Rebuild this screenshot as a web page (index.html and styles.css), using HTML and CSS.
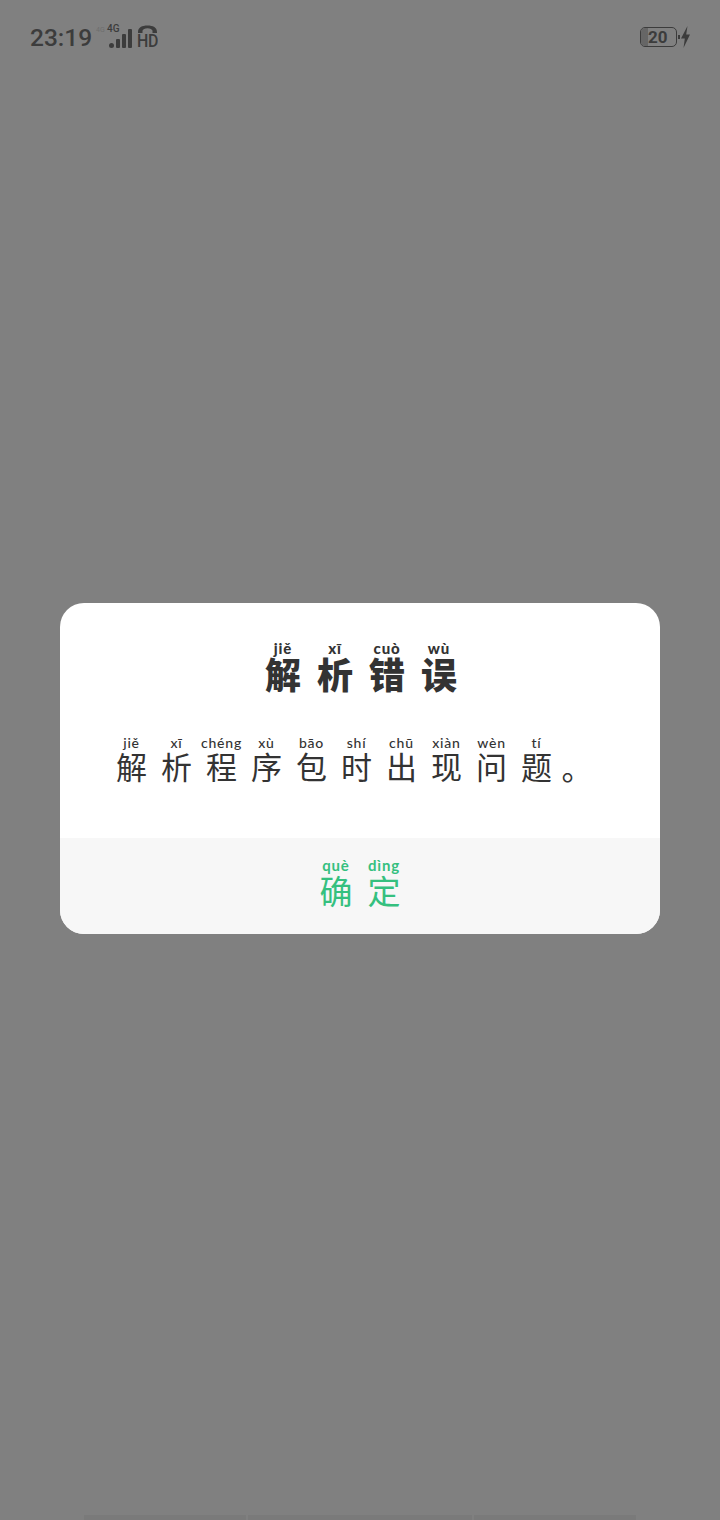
FILE: index.html
```html
<!DOCTYPE html>
<html lang="zh-CN">

<head>
    <meta charset="UTF-8">
    <meta name="viewport" content="width=device-width, initial-scale=1.0">
    <title>解析错误</title>
    <link rel="stylesheet" href="styles.css">
</head>

<body>
    <div class="page">
        <div class="status-bar">
            <div class="status-left">
                <span class="time">23:19</span>
                <span class="tiny-mark">4G</span>
                <div class="signal">
                    <span class="net">4G</span>
                    <svg class="bars" width="23" height="20" viewBox="0 0 23 20">
                        <circle cx="2.5" cy="16.5" r="2.5" fill="#3c3c3c" />
                        <rect x="7" y="10" width="4" height="9" rx="1" fill="#3c3c3c" />
                        <rect x="13" y="5" width="4" height="14" rx="1" fill="#3c3c3c" />
                        <rect x="19" y="0" width="4" height="19" rx="1" fill="#3c3c3c" />
                    </svg>
                </div>
                <div class="hd">
                    <svg width="21" height="9" viewBox="0 0 21 9">
                        <path d="M1 7C1 2.500 5 0.500 10.500 0.500S20 2.500 20 7V8H15.500V5.800C15.500 4.500 13 3.200 10.500 3.200S5.500 4.500 5.500 5.800V8H1Z" fill="#3c3c3c" />
                    </svg>
                    <span class="hd-text">HD</span>
                </div>
            </div>
            <div class="status-right">
                <div class="battery">
                    <span class="battery-fill"></span>
                    <span class="battery-num">20</span>
                </div>
                <span class="battery-dot"></span>
                <svg width="9" height="22" viewBox="0 0 9 22">
                    <path d="M6.500 0L0 12.500H3.800L2.500 22L9 8.500H5.200Z" fill="#3c3c3c" />
                </svg>
            </div>
        </div>

        <div class="dialog">
            <div class="dialog-body">
                <h1 class="dialog-title">
                    <span class="ch"><ruby>解<rt>jiě</rt></ruby></span>
                    <span class="ch"><ruby>析<rt>xī</rt></ruby></span>
                    <span class="ch"><ruby>错<rt>cuò</rt></ruby></span>
                    <span class="ch"><ruby>误<rt>wù</rt></ruby></span>
                </h1>
                <p class="dialog-text">
                    <span class="ch"><ruby>解<rt>jiě</rt></ruby></span>
                    <span class="ch"><ruby>析<rt>xī</rt></ruby></span>
                    <span class="ch"><ruby>程<rt>chéng</rt></ruby></span>
                    <span class="ch"><ruby>序<rt>xù</rt></ruby></span>
                    <span class="ch"><ruby>包<rt>bāo</rt></ruby></span>
                    <span class="ch"><ruby>时<rt>shí</rt></ruby></span>
                    <span class="ch"><ruby>出<rt>chū</rt></ruby></span>
                    <span class="ch"><ruby>现<rt>xiàn</rt></ruby></span>
                    <span class="ch"><ruby>问<rt>wèn</rt></ruby></span>
                    <span class="ch"><ruby>题<rt>tí</rt></ruby></span>
                    <span class="ch stop">。</span>
                </p>
            </div>
            <div class="dialog-footer">
                <span class="ch"><ruby>确<rt>què</rt></ruby></span>
                <span class="ch"><ruby>定<rt>dìng</rt></ruby></span>
            </div>
        </div>

        <div class="bottom-strip">
            <span class="strip-a"></span>
            <span class="strip-b"></span>
            <span class="strip-a"></span>
        </div>
    </div>
</body>

</html>
```

FILE: styles.css
```css
* {
    box-sizing: border-box;
}

html,
body {
    margin: 0;
    padding: 0;
}

body {
    background-color: #808080;
    font-family: "Noto Sans CJK SC", "Noto Sans", sans-serif;
}

.page {
    display: flex;
    flex-direction: column;
    height: 1520px;
    overflow: hidden;
}

/* status bar */
.status-bar {
    display: flex;
    justify-content: space-between;
    align-items: center;
    height: 74px;
    padding: 0 30px;
    color: #3c3c3c;
    font-family: Roboto, sans-serif;
}

.status-left,
.status-right {
    display: flex;
    align-items: center;
}

.time {
    width: 66px;
    font-size: 24.500px;
    font-weight: 500;
}

.tiny-mark {
    width: 11px;
    font-size: 7px;
    color: #6e6e6e;
    margin-bottom: 14px;
}

.signal {
    display: flex;
    flex-direction: column;
    align-items: flex-end;
    width: 25px;
    height: 24px;
    margin-right: 5px;
}

.net {
    align-self: flex-start;
    height: 0;
    font-size: 10px;
    font-weight: 500;
    line-height: 10px;
    margin-top: -1px;
}

.bars {
    margin-top: 5px;
}

.hd {
    display: flex;
    flex-direction: column;
    width: 21px;
    height: 24px;
}

.hd-text {
    font-size: 19px;
    font-weight: 500;
    line-height: 14px;
    letter-spacing: -0.5px;
    transform: scaleX(0.84);
    transform-origin: left;
}

.battery {
    display: flex;
    align-items: center;
    position: relative;
    width: 37px;
    height: 20px;
    border: 1.500px solid #3c3c3c;
    border-radius: 5px;
    overflow: hidden;
}

.battery-fill {
    width: 7px;
    height: 100%;
    background-color: #666;
}

.battery-num {
    position: absolute;
    left: 7px;
    font-size: 17px;
    font-weight: 700;
    line-height: 17px;
}

.battery-dot {
    width: 2px;
    height: 4px;
    margin: 0 1px;
    background-color: #3c3c3c;
}

/* dialog */
.dialog {
    width: 600px;
    margin: 529px auto 0;
    border-radius: 24px;
    background-color: #fff;
    overflow: hidden;
}

.dialog-body {
    height: 235px;
    padding-top: 38px;
}

.dialog-title {
    display: flex;
    justify-content: center;
    margin: 0;
    padding-left: 2px;
    color: #333;
    font-size: 36px;
    font-weight: 900;
    line-height: 48px;
}

.dialog-title .ch {
    width: 52px;
}

.dialog-title rt {
    font-size: 15px;
    font-weight: 900;
}

.dialog-text {
    display: flex;
    margin: 39px 0 0;
    padding-left: 49px;
    color: #333;
    font-size: 31px;
    font-weight: 400;
    line-height: 40px;
}

.dialog-text .ch {
    width: 45px;
}

.dialog-text .stop {
    width: 36px;
    padding-top: 11px;
}

.dialog-text rt {
    font-size: 14px;
    font-weight: 500;
}

.ch {
    display: block;
    text-align: center;
}

rt {
    font-family: Lato, "Noto Sans", sans-serif;
    line-height: 1;
    letter-spacing: 0.8px;
}

.dialog-footer {
    display: flex;
    justify-content: center;
    height: 96px;
    padding-top: 20px;
    background-color: #f7f7f7;
    color: #35c07f;
    font-size: 33px;
    font-weight: 400;
    line-height: 42px;
}

.dialog-footer .ch {
    width: 48px;
}

.dialog-footer rt {
    font-size: 15px;
    font-weight: 700;
}

/* content under the scrim, cut by the bottom edge */
.bottom-strip {
    display: flex;
    gap: 2px;
    height: 5px;
    margin: auto 84px 0;
}

.bottom-strip span {
    background-color: #7a7a7a;
}

.strip-a {
    width: 162px;
}

.strip-b {
    flex: 1;
}
```
